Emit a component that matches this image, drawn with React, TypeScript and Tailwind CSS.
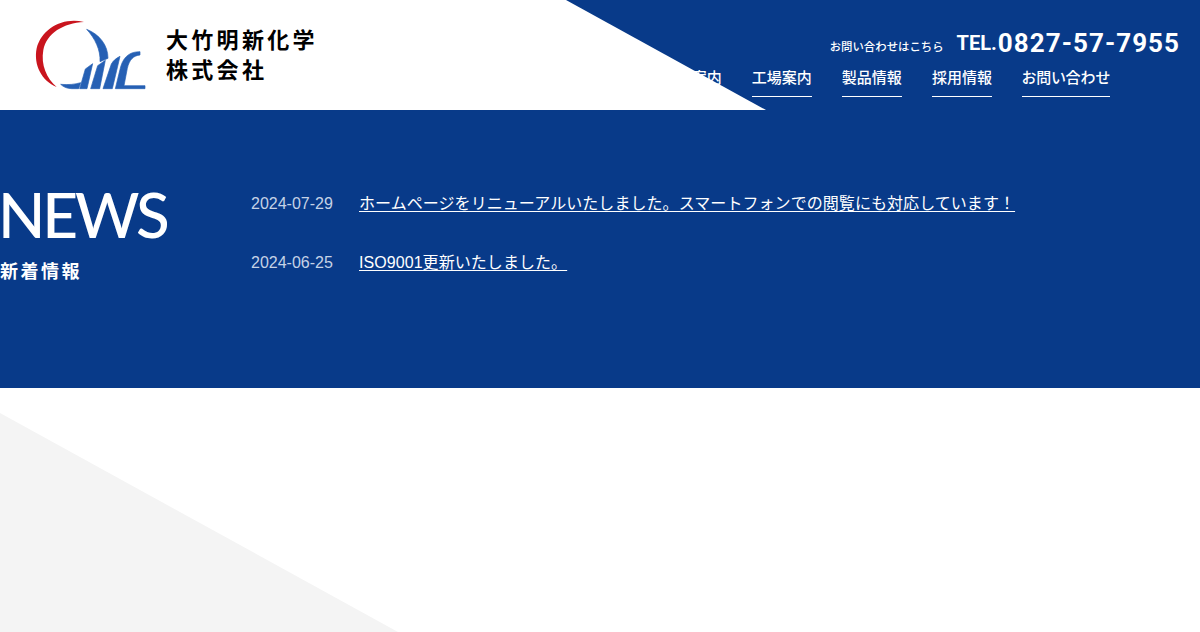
import React from 'react';

const jp = { fontFamily: '"Noto Sans CJK JP", sans-serif' };

const navItems = ['会社案内', '工場案内', '製品情報', '採用情報', 'お問い合わせ'];

const news = [
  { date: '2024-07-29', title: 'ホームページをリニューアルいたしました。スマートフォンでの閲覧にも対応しています！' },
  { date: '2024-06-25', title: 'ISO9001更新いたしました。' },
];

const Logo = () => (
  <svg viewBox="0 0 375 240" className="w-[125px] h-[80px] shrink-0">
    <path d="M162 21C100 5 35 40 20 100C10 150 35 198 80 216C50 190 32 150 40 105C50 55 100 24 162 21Z" fill="#c9151e" />
    <g fill="#2660b4" stroke="#2660b4" strokeWidth="2">
      <path d="M170 43C208 58 234 90 234 130L210 140C212 105 195 70 170 43Z" />
      <path d="M92 208C115 210 135 208 152 203L146 221H125C112 221 100 216 92 208Z" />
      <path d="M149 221L166 162L188 146L171 221Z" />
      <path d="M182 221L203 152L226 136L209 221Z" />
      <path d="M219 221L244 147C250 137 258 130 270 124L247 221Z" />
      <path d="M256 221L272 155C282 122 302 110 330 110V120C310 122 298 134 292 160L282 212H345V221Z" />
    </g>
  </svg>
);

export default function App() {
  return (
    <div className="bg-white min-h-[632px]" style={jp}>
      <header className="relative h-[110px] bg-[#083a89] flex justify-between overflow-hidden">
        <div className="absolute inset-0 z-10 bg-white [clip-path:polygon(0_0,566px_0,766px_110px,0_110px)]" />
        <div className="relative z-20 flex pl-[30px] pt-[15px]">
          <Logo />
          <div className="ml-[11px] mt-[8px] text-[22px] leading-[30px] font-bold tracking-[0.15em] text-black">
            <div>大竹明新化学</div>
            <div>株式会社</div>
          </div>
        </div>
        <div className="flex flex-col items-end pr-[20px] text-white">
          <div className="flex items-center h-[30px] mt-[28px]">
            <span className="text-[11.4px] font-medium mr-[13px] mt-[8px]">お問い合わせはこちら</span>
            <span className="font-['Roboto',sans-serif] font-bold text-[20px] leading-none mr-[1px]">TEL.</span>
            <span className="font-['Roboto',sans-serif] font-bold text-[26px] leading-none tracking-[0.04em]">0827-57-7955</span>
          </div>
          <nav className="flex gap-[30px] mr-[70px] mt-[4px]">
            {navItems.map(item => (
              <a key={item} className="block h-[35px] border-b border-white text-[15px] leading-[30px] font-medium whitespace-nowrap [font-feature-settings:'palt']">
                {item}
              </a>
            ))}
          </nav>
        </div>
      </header>

      <section className="h-[278px] bg-[#083a89] flex text-white">
        <div className="w-[251px] shrink-0 pt-[69px]">
          <h2 className="font-['Lato',sans-serif] font-medium text-[62px] leading-[70px] -tracking-[0.05em] -ml-[2px]">NEWS</h2>
          <p className="mt-[9px] text-[18px] leading-[24px] font-bold tracking-[0.14em]">新着情報</p>
        </div>
        <ul className="pt-[84px] flex flex-col gap-[39px]">
          {news.map(n => (
            <li key={n.date} className="flex h-[20px] items-center">
              <span className="w-[108px] shrink-0 font-['Liberation_Sans',sans-serif] text-[16px] text-[#c5d2e6]">{n.date}</span>
              <a className="underline underline-offset-2 text-[16px] tracking-[0.004em] font-['Liberation_Sans','Noto_Sans_CJK_JP',sans-serif] whitespace-nowrap">
                {n.title}
              </a>
            </li>
          ))}
        </ul>
      </section>

      <div className="relative h-[244px] bg-white overflow-hidden">
        <div className="absolute inset-0 bg-[#f4f4f4] [clip-path:polygon(0_25px,398px_244px,0_244px)]" />
      </div>
    </div>
  );
}
